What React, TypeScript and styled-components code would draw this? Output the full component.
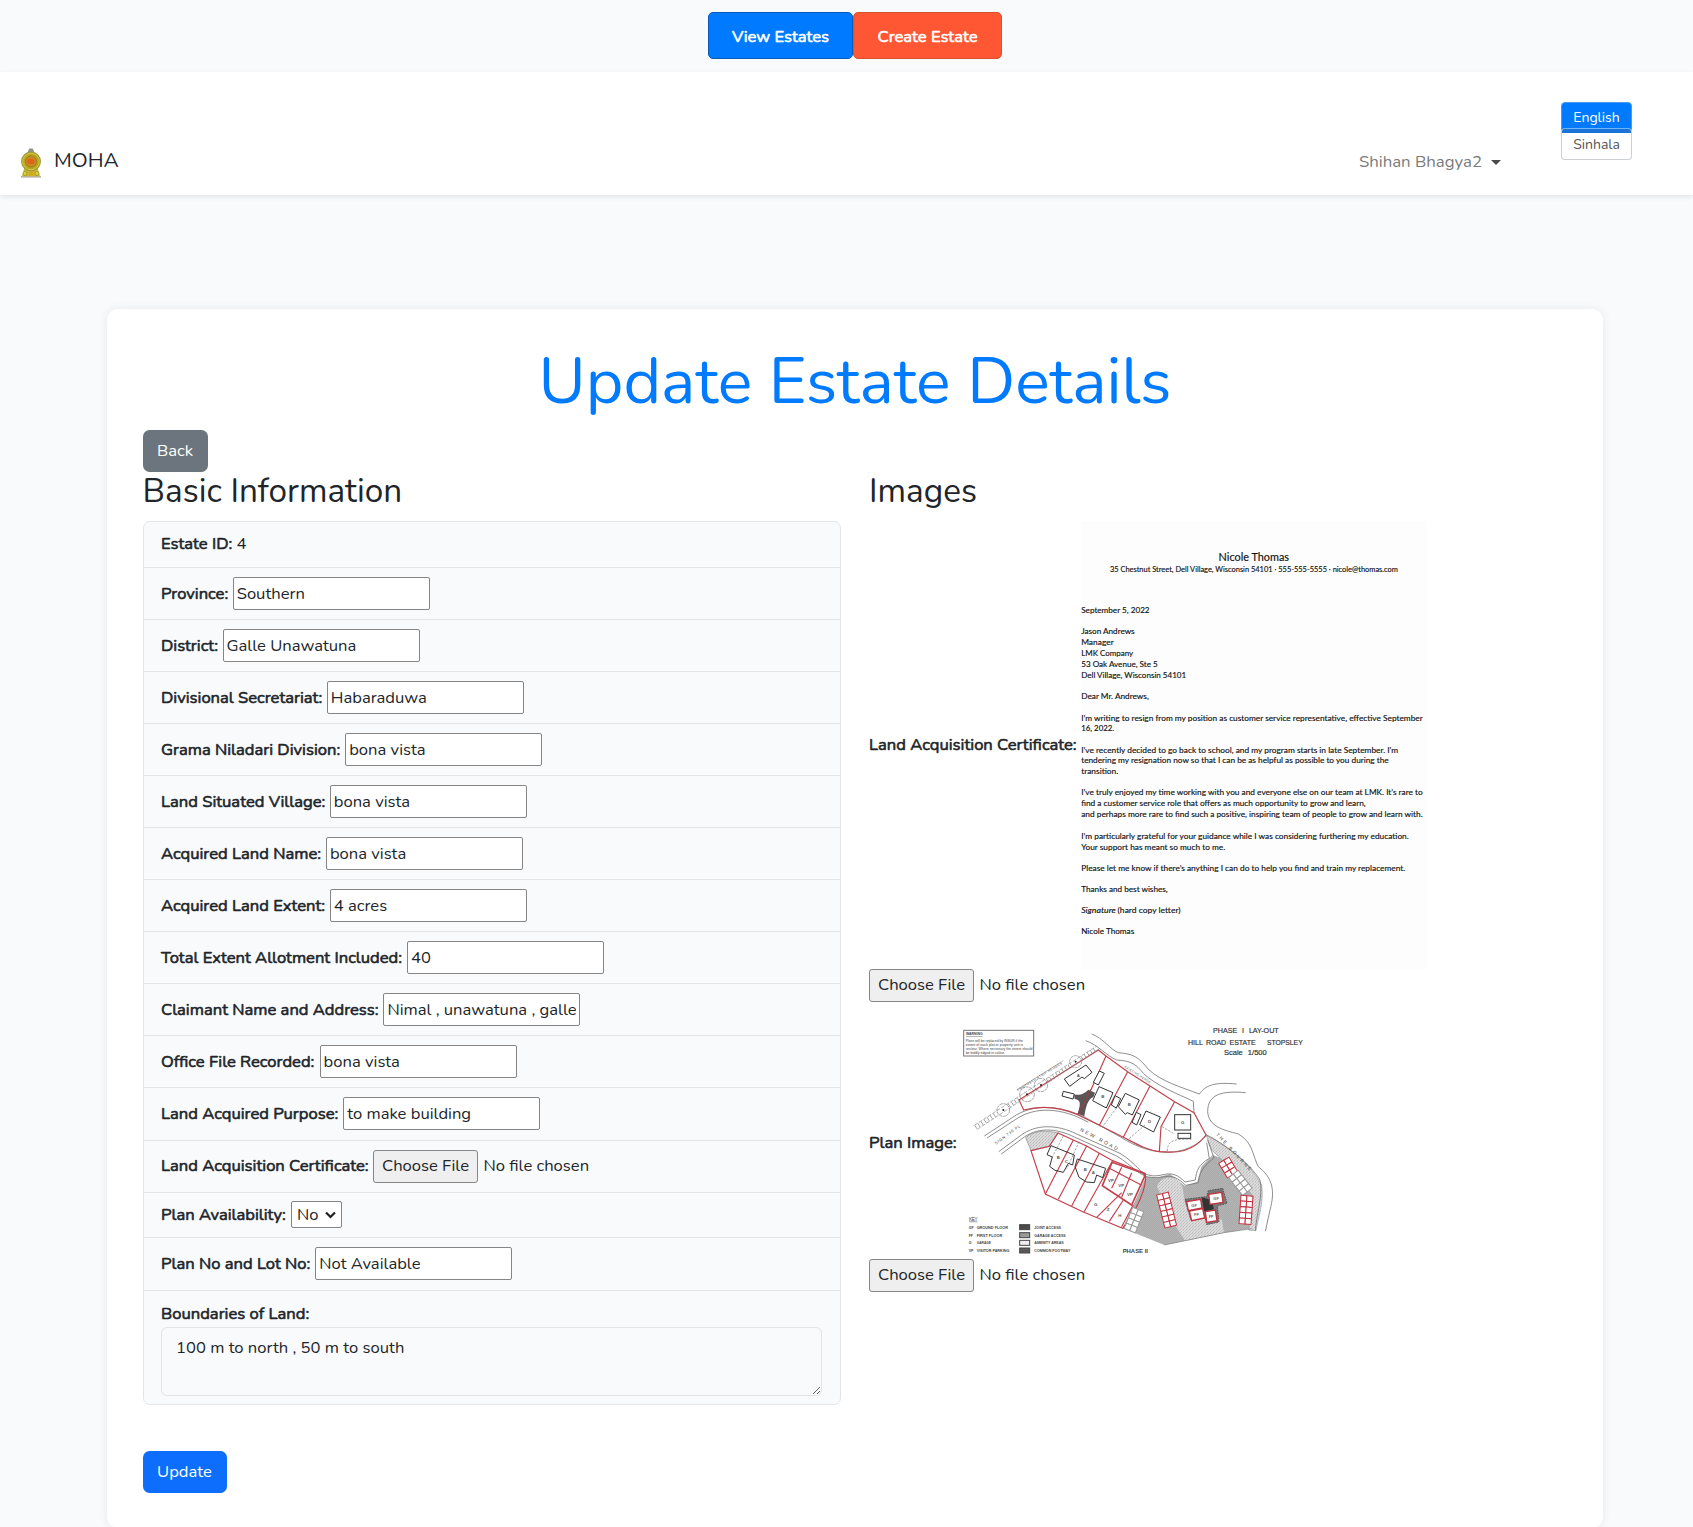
import React from "react";
import styled, { createGlobalStyle } from "styled-components";

const GlobalStyle = createGlobalStyle`
  *, *::before, *::after { box-sizing: border-box; }
  html, body { margin: 0; padding: 0; }
  body {
    background: #f8fafc;
    color: #212529;
    font-family: Nunito, Lato, "Open Sans", sans-serif;
    font-size: 16.6px;
    line-height: 26px;
    overflow: hidden;
  }
  h1, h2, p { margin: 0; font-weight: 400; }
  button, input, select, textarea { font: inherit; color: inherit; letter-spacing: inherit; }
`;

const Page = styled.div`
  height: 1527px;
  overflow: hidden;
`;

const TopBar = styled.div`
  display: flex;
  justify-content: center;
  height: 72px;
  padding: 12px 0 0 17px;
`;

const TopButton = styled.button<{ $bg: string; $edge: string; $width: number }>`
  width: ${(p) => p.$width}px;
  height: 47px;
  padding: 2px 0 0;
  border: 1px solid ${(p) => p.$edge};
  border-radius: 5px;
  background: ${(p) => p.$bg};
  color: #fff;
  -webkit-text-stroke: 0.6px currentColor;
`;

const NavBar = styled.nav`
  display: flex;
  align-items: flex-start;
  height: 123px;
  padding: 0 61px 0 20px;
  background: #fff;
  box-shadow: 0 2px 5px rgba(0, 0, 0, 0.09);
`;

const Brand = styled.div`
  display: flex;
  align-items: flex-start;
  gap: 12px;
  margin-top: 76px;
`;

const BrandName = styled.span`
  font-size: 20.8px;
  line-height: 24px;
`;

const UserMenu = styled.div`
  display: flex;
  align-items: center;
  gap: 9px;
  margin: 77px 60px 0 auto;
  color: #7b7b7b;
  font-size: 16.8px;
`;

const Caret = styled.span`
  border: 5px solid transparent;
  border-top-color: #4c4c4c;
  border-bottom: 0;
`;

const LanguageSwitch = styled.div`
  display: flex;
  flex-direction: column;
  width: 71px;
  margin-top: 30px;
  font-size: 14px;
`;

const LanguageButton = styled.button<{ $active?: boolean }>`
  height: ${(p) => (p.$active ? 31 : 32)}px;
  margin-top: ${(p) => (p.$active ? 0 : -5)}px;
  padding: 0;
  line-height: ${(p) => (p.$active ? 29 : 31)}px;
  border: 1px solid ${(p) => (p.$active ? "#4a9bf0" : "#ccd0d4")};
  border-radius: 4px;
  border-top-color: ${(p) => (p.$active ? "#4a9bf0" : "#6fb4fb")};
  background: ${(p) =>
    p.$active ? "#007bff" : "linear-gradient(#1a73d9 0 4px, #fff 4px)"};
  color: ${(p) => (p.$active ? "#fff" : "#555")};
`;

const Card = styled.main`
  width: 1496px;
  height: 1219px;
  margin: 114px 0 0 107px;
  padding: 34px 35.5px;
  border-radius: 11px;
  background: #fff;
  box-shadow: 0 0 10px rgba(0, 0, 0, 0.08);
`;

const Title = styled.h1`
  height: 86.5px;
  color: #007bff;
  font-size: 64.7px;
  line-height: 78px;
  text-align: center;
`;

const ActionButton = styled.button<{ $bg: string; $width: number }>`
  display: block;
  width: ${(p) => p.$width}px;
  height: 42.5px;
  padding: 1px 0 0;
  border: 0;
  border-radius: 6.5px;
  background: ${(p) => p.$bg};
  color: #fff;
`;

const Columns = styled.div`
  display: grid;
  grid-template-columns: 698.5px 1fr;
  column-gap: 28px;
`;

const Column = styled.section`
  display: flex;
  flex-direction: column;
  align-items: stretch;
`;

const SectionTitle = styled.h2`
  height: 48.5px;
  font-size: 33.3px;
  line-height: 38px;
`;

const InfoList = styled.div`
  overflow: hidden;
  border: 1px solid #e3e6e9;
  border-radius: 7px;
  background: #f8fafc;
`;

const InfoRow = styled.div<{ $height?: number }>`
  display: flex;
  align-items: center;
  height: ${(p) => p.$height ?? 52.05}px;
  padding: 0 17.5px;
  border-bottom: 1px solid #e3e6e9;
`;

const Label = styled.span<{ $width?: number; $drop?: number }>`
  flex: none;
  width: ${(p) => (p.$width ? p.$width + "px" : "auto")};
  margin-top: ${(p) => p.$drop ?? 0}px;
  -webkit-text-stroke: 0.6px currentColor;
  white-space: nowrap;
`;

const TextInput = styled.input`
  width: 197px;
  height: 33px;
  padding: 1px 3px;
  border: 1px solid #858585;
  border-radius: 2px;
  background: #fff;
`;

const PlanSelect = styled.div`
  display: flex;
  align-items: center;
  justify-content: space-between;
  width: 51px;
  height: 26.5px;
  padding: 0 5px;
  border: 1px solid #858585;
  border-radius: 2px;
  background: #fff;
`;

const FilePicker = styled.div`
  display: flex;
  align-items: center;
  gap: 5.5px;
`;

const FileButton = styled.button`
  width: 105px;
  height: 33px;
  padding: 0;
  border: 1px solid #858585;
  border-radius: 3px;
  background: #efefef;
`;

const BoundaryRow = styled.div`
  height: 113px;
  padding: 10px 18.5px 0 17.5px;
`;

const BoundaryArea = styled.textarea`
  display: block;
  width: 661px;
  height: 69.5px;
  padding: 7px 14px;
  border: 1px solid #e1e4e8;
  border-radius: 6px;
  background: #f8fafc;
  resize: both;
`;

const Figure = styled.div<{ $height: number }>`
  display: flex;
  align-items: center;
  height: ${(p) => p.$height}px;
`;

const PlanFigure = styled(Figure)`
  margin-top: 8px;
`;

const UpdateSlot = styled.div`
  margin-top: 46px;
`;

const Emblem = () => (
  <svg width="22" height="30" viewBox="0 0 22 30">
    <path d="M8 3 L9.5 0.5 H12.5 L14 3 L13 6 H9 Z" fill="#8d9488" />
    <path d="M2 28.5 L4 21 H18 L20 28.5 Z" fill="#c9b92c" />
    <circle cx="11" cy="13.5" r="10" fill="#9c9a3c" />
    <circle cx="11" cy="13.5" r="8.3" fill="#b9a71f" stroke="#d8c63a" />
    <circle cx="11" cy="13.5" r="5.6" fill="#c98a1b" stroke="#8e7a1e" strokeWidth="0.8" />
    <path d="M8 11 h5 l1.5 2 -1 3 h-5 l-1.5-2z" fill="#e2611c" />
    <rect x="1" y="28" width="20" height="1.6" fill="#b8b29a" />
    <circle cx="5" cy="25.5" r="2" fill="#e3d23a" stroke="#8e8a2a" strokeWidth="0.7" />
    <circle cx="17" cy="25.5" r="2" fill="#e3d23a" stroke="#8e8a2a" strokeWidth="0.7" />
    <rect x="9" y="23.5" width="4" height="4" fill="#d9a520" />
  </svg>
);

type LetterLine = [text: string, baseline: number, length: number];

const letterLines: LetterLine[] = [
  ["September 5, 2022", 613, 68.4],
  ["Jason Andrews", 634.7, 53.4],
  ["Manager", 645.5, 32.5],
  ["LMK Company", 656.3, 52],
  ["53 Oak Avenue, Ste 5", 667, 76.5],
  ["Dell Village, Wisconsin 54101", 678, 105],
  ["Dear Mr. Andrews,", 699.7, 67.6],
  ["I’m writing to resign from my position as customer service representative, effective September", 721, 341.5],
  ["16, 2022.", 731.7, 33],
  ["I’ve recently decided to go back to school, and my program starts in late September. I’m", 753, 317],
  ["tendering my resignation now so that I can be as helpful as possible to you during the", 763.7, 307.5],
  ["transition.", 774.5, 37],
  ["I’ve truly enjoyed my time working with you and everyone else on our team at LMK. It’s rare to", 795.7, 341.5],
  ["find a customer service role that offers as much opportunity to grow and learn,", 806.7, 284.5],
  ["and perhaps more rare to find such a positive, inspiring team of people to grow and learn with.", 817.5, 341.5],
  ["I’m particularly grateful for your guidance while I was considering furthering my education.", 839, 327.5],
  ["Your support has meant so much to me.", 850, 144],
  ["Please let me know if there’s anything I can do to help you find and train my replacement.", 871, 324],
  ["Thanks and best wishes,", 892.3, 86.5],
  ["Nicole Thomas", 934.5, 53],
];

const Letter = () => (
  <svg
    width="346"
    height="448"
    viewBox="1081.7 521.5 346 448"
    fontFamily="Lato, sans-serif"
    fontSize="8.2"
    fill="#111"
    stroke="#111"
    strokeWidth="0.15"
  >
    <rect x="1081.7" y="521.5" width="346" height="448" fill="#fdfdfd" stroke="none" />
    <text x="1219.3" y="561" fontSize="10.8" textLength="70.4" lengthAdjust="spacingAndGlyphs">Nicole Thomas</text>
    <text x="1110.6" y="572.3" fontSize="7.9" textLength="288" lengthAdjust="spacingAndGlyphs">
      35 Chestnut Street, Dell Village, Wisconsin 54101 · 555-555-5555 · nicole@thomas.com
    </text>
    {letterLines.map(([text, y, length]) => (
      <text key={y} x="1081.9" y={y} textLength={length} lengthAdjust="spacingAndGlyphs">
        {text}
      </text>
    ))}
    <text x="1081.9" y="913.3" textLength="34.5" lengthAdjust="spacingAndGlyphs" fontStyle="italic">Signature</text>
    <text x="1118.3" y="913.3" textLength="63" lengthAdjust="spacingAndGlyphs">(hard copy letter)</text>
  </svg>
);

const Tree = ({ x, y, r }: { x: number; y: number; r: number }) => (
  <g>
    <circle cx={x} cy={y} r={r} fill="none" stroke="#777" strokeWidth="2" strokeDasharray="9 2" />
    <circle cx={x} cy={y} r="3" fill="#222" />
  </g>
);

const Garages = ({ x, y, angle, rows, red = true }: { x: number; y: number; angle: number; rows: number; red?: boolean }) => (
  <g transform={`translate(${x} ${y}) rotate(${angle})`} stroke={red ? "#c2323f" : "#999"} strokeWidth="3">
    {Array.from({ length: rows }, (_, i) => (
      <g key={i}>
        <rect x="0" y={i * 17} width="18" height="17" fill="#fff" />
        <rect x="18" y={i * 17} width="18" height="17" fill="#fff" />
      </g>
    ))}
  </g>
);

const keyRows = [
  { code: "GF", name: "GROUND FLOOR", width: 94, area: "JOINT ACCESS", areaWidth: 80, fill: "#4a4a4a", y: 656 },
  { code: "FF", name: "FIRST FLOOR", width: 77, area: "GARAGE ACCESS", areaWidth: 94, fill: "#9a9a9a", y: 680 },
  { code: "G", name: "GARAGE", width: 43, area: "AMENITY AREAS", areaWidth: 88, fill: "#eee", y: 703 },
  { code: "VP", name: "VISITOR PARKING", width: 98, area: "COMMON FOOTWAY", areaWidth: 108, fill: "#5a5a5a", y: 726 },
];

const noticeLines: [string, number, number][] = [
  ["Plans will be replaced by INSUR if the", 97, 172],
  ["extent of each plot or property unit is", 109, 172],
  ["unclear. Where necessary the extent should", 121, 200],
  ["be boldly edged in colour.", 133, 118],
];

const SitePlan = () => (
  <svg width="355" height="249" viewBox="63 0 1065 747" fontFamily="Liberation Sans, Arial, sans-serif" fill="none">
    <defs>
      <pattern id="speckle" width="9" height="9" patternUnits="userSpaceOnUse">
        <rect width="9" height="9" fill="#dcdcdc" />
        <circle cx="2" cy="2" r="1.4" fill="#8f8f8f" />
        <circle cx="7" cy="5" r="1.2" fill="#aaa" />
        <circle cx="4" cy="8" r="1.1" fill="#999" />
      </pattern>
      <pattern id="hatch" width="6" height="6" patternUnits="userSpaceOnUse">
        <rect width="6" height="6" fill="#b3b3b3" />
        <path d="M0 6 L6 0" stroke="#a2a2a2" strokeWidth="1.5" />
      </pattern>
    </defs>

    <rect x="71" y="61" width="210" height="77" stroke="#777" strokeWidth="3" />
    <g fill="#444">
      <text x="78" y="76" fontSize="12" fontWeight="700" textLength="50" lengthAdjust="spacingAndGlyphs" textDecoration="underline">WARNING</text>
      {noticeLines.map(([text, y, length]) => (
        <text key={y} x="77" y={y} fontSize="10" textLength={length} lengthAdjust="spacingAndGlyphs">{text}</text>
      ))}
    </g>
    <g fill="#333" fontSize="20" stroke="#333" strokeWidth="0.5">
      <text x="819" y="70" textLength="197" lengthAdjust="spacingAndGlyphs" wordSpacing="8">PHASE I LAY-OUT</text>
      <text x="744" y="104" textLength="203" lengthAdjust="spacingAndGlyphs" wordSpacing="4">HILL ROAD ESTATE</text>
      <text x="981" y="104" textLength="107" lengthAdjust="spacingAndGlyphs">STOPSLEY</text>
      <text x="852" y="136" textLength="128" lengthAdjust="spacingAndGlyphs" wordSpacing="8">Scale 1/500</text>
    </g>

    {/* access areas */}
    <path d="M257 383 C280 361 320 360 354 369 L328 409 L273 422 Z" fill="url(#speckle)" stroke="#888" strokeWidth="2" />
    <path d="M618 500 L650 503 L690 492 L735 528 L772 515 L784 470 L818 435 L860 450 L940 545 L935 655 L852 668 L735 692 L673 705 L548 655 Z" fill="url(#hatch)" />
    <path d="M651 530 C658 505 690 492 716 512 C733 530 728 550 738 590 L846 630 L852 668 L735 692 L707 648 L660 550 Z" fill="url(#speckle)" />
    <path d="M798 375 C850 400 920 445 965 525 C972 580 955 620 948 662 L926 660 L940 560 L900 510 L842 445 L815 420 Z" fill="url(#speckle)" stroke="#999" strokeWidth="2" />
    <path d="M673 705 L852 668 L935 656" stroke="#777" strokeWidth="2" />

    {/* roads */}
    <g stroke="#777" strokeWidth="2.5">
      <path d="M133 378 L218 322 C280 278 370 285 450 330 L540 380 C640 445 740 440 798 378" />
      <path d="M141 384 L226 329 C285 288 365 292 445 337" />
      <path d="M176 425 L240 378 C285 342 350 342 410 372 L540 430 C590 460 600 493 630 496 C670 505 690 470 735 516 L766 510 C770 480 775 465 808 445 L800 398" />
      <path d="M184 432 L246 386 C290 352 345 352 405 382 L530 438 C580 468 600 502 635 502 C675 508 690 480 737 526 L775 518 C778 488 788 470 822 444 L803 390" />
      <path d="M455 72 C490 85 510 118 535 128 C580 132 595 140 625 178 C665 215 720 230 778 252 C795 228 820 215 890 222" />
      <path d="M437 92 C475 105 500 138 530 150 C575 152 590 165 610 190 C650 228 710 250 760 274 L762 310" />
      <path d="M917 248 C850 242 803 250 803 305 C806 350 850 360 895 372 C940 400 935 430 955 470 C1000 505 1005 545 990 600 L976 664" />
      <path d="M798 374 C850 400 930 460 960 510 C970 555 948 620 946 662" />
    </g>

    {/* plot boundaries */}
    <g stroke="#c2414c" strokeWidth="3.5">
      <path d="M237 270 L475 120 L498 138 L563 185 L630 228 L704 275 L762 308 L798 375 C760 425 715 430 658 425 C620 420 590 402 550 382 L478 346 L413 314 C360 292 310 284 251 300 Z" />
      <path d="M498 138 L455 235 L413 314 M563 185 L478 346 M630 228 L550 382 M704 275 L663 350 L658 425" />
      <path d="M273 422 L328 409 L354 369 L400 390 L440 408 L478 430 L518 452 L616 490 C622 535 590 600 548 655 L430 606 L316 552 Z" />
      <path d="M400 390 L316 552 M440 408 L355 568 M478 430 L395 588 M518 452 L432 606 M545 548 L470 622 M580 584 L545 650 M550 570 L508 634" />
      <path d="M516 457 L487 527 L575 585 L615 497 L610 490 Z" strokeWidth="5" />
      <path d="M545 472 L515 535 M575 488 L545 562 M508 475 L605 526" />
    </g>

    {/* houses */}
    <g stroke="#333" strokeWidth="3" fill="#fff">
      <path d="M373 207 L438 165 L456 187 L433 206 L426 201 L389 229 Z" />
      <path d="M478 183 L493 190 L475 225 L460 217 Z M370 244 L403 252 L399 267 L366 258 Z" />
      <path d="M477 230 L519 248 L499 294 L458 272 Z M556 250 L598 270 L577 315 L562 308 L556 313 L535 290 Z M618 303 L661 321 L641 366 L599 344 Z" />
      <rect x="704" y="314" width="48" height="46" />
      <rect x="714" y="370" width="38" height="15" />
      <path d="M525 257 L542 266 L529 294 L514 285 Z M589 307 L603 314 L590 345 L576 337 Z" />
      <path d="M333 407 L321 434 L337 441 L329 469 L345 481 L370 487 L385 460 L398 465 L403 435 Z" fill="none" />
      <path d="M412 447 L405 470 L417 502 L440 516 L463 518 L470 495 L488 503 L497 475 Z" fill="none" />
    </g>
    <path d="M402 254 C425 257 435 248 445 239 L465 248 L460 262 C444 266 437 292 433 319 L413 311 C421 285 425 270 404 267 Z" fill="#5b5555" />
    <path d="M455 235 L413 314" stroke="#a33a44" strokeWidth="3" />
    <g fill="#555" fontSize="13" fontWeight="700">
      <text x="410" y="201">A</text><text x="484" y="265">B</text><text x="563" y="287">B</text>
      <text x="624" y="339">D</text><text x="723" y="342">G</text><text x="350" y="448">B</text>
      <text x="374" y="458">C</text><text x="431" y="482">B</text><text x="455" y="493">A</text>
      <text x="462" y="588">G</text><text x="500" y="604">Z</text><text x="535" y="621">H</text>
      <text x="504" y="516">VP</text><text x="535" y="530">VP</text><text x="561" y="558">VP</text>
    </g>
    <path d="M536 285 L488 350 M615 345 L565 388 M682 424 C682 395 695 386 754 388 M666 350 L700 370 M417 395 L380 478 M370 378 L337 441" stroke="#777" strokeWidth="2" strokeDasharray="7 4" />

    {/* tree line */}
    <g stroke="#888" strokeWidth="2">
      <path d="M103 346 L470 108 M112 358 L478 116" strokeDasharray="12 4" />
      <path d="M107 352 L172 310 M207 287 L240 266 M322 213 L388 169 M425 144 L468 116" strokeWidth="12" strokeDasharray="2 9" />
      <path d="M230 240 L370 152" strokeWidth="1.5" />
    </g>
    <Tree x={190} y={300} r={19} />
    <Tree x={261} y={253} r={22} />
    <Tree x={303} y={225} r={20} />
    <Tree x={407} y={155} r={18} />

    {/* garages and flats */}
    <Garages x={650} y={555} angle={-14} rows={6} />
    <Garages x={836} y={460} angle={-31} rows={3} />
    <Garages x={866} y={503} angle={-38} rows={4} red={false} />
    <Garages x={903} y={556} angle={4} rows={5} />
    <Garages x={578} y={592} angle={22} rows={4} red={false} />
    <path d="M735 568 L800 560 L805 542 L848 535 L861 580 L832 588 L837 636 L800 644 L796 625 L752 628 Z" stroke="#555" strokeWidth="3" strokeDasharray="5 3" fill="#777" />
    <path d="M785 562 L815 570 L822 598 L792 604 Z" fill="#333" />
    <g stroke="#c2323f" strokeWidth="4" fill="#fff">
      <path d="M740 575 L782 568 L786 594 L745 602 Z M748 603 L788 596 L794 624 L755 632 Z M806 553 L845 547 L849 577 L810 583 Z M796 605 L826 600 L831 632 L800 637 Z" />
    </g>
    <g fill="#666" fontSize="12" fontWeight="700">
      <text x="754" y="590">GF</text><text x="762" y="618">FF</text><text x="820" y="570">GF</text><text x="806" y="623">FF</text>
    </g>

    <g fill="#444">
      <text transform="translate(419 362) rotate(28)" fontSize="15" textLength="126">NEW ROAD</text>
      <text transform="translate(827 374) rotate(47)" fontSize="14" textLength="148">THE BOURNE</text>
      <text transform="translate(168 404) rotate(-36)" fontSize="12" textLength="91">SIGN 736 PL</text>
      <text transform="translate(234 244) rotate(-32)" fontSize="10" textLength="156">PROPOSED STRIP HEDGES</text>
      <text transform="translate(553 172) rotate(32)" fontSize="9" textLength="90">EXISTING HEDGE</text>
      <text x="548" y="728" fontSize="14" fontWeight="700" textLength="76" lengthAdjust="spacingAndGlyphs">PHASE II</text>
      <text x="87" y="632" fontSize="14" textLength="26" textDecoration="underline">KEY</text>
    </g>
    {keyRows.map((row) => (
      <g key={row.code} fill="#444" fontSize="10.5" fontWeight="700">
        <text x="86" y={row.y}>{row.code}</text>
        <text x="110" y={row.y} textLength={row.width} lengthAdjust="spacingAndGlyphs">{row.name}</text>
        <rect x="239" y={row.y - 12} width="30" height="15" fill={row.fill} stroke="#444" strokeWidth="3" />
        <text x="283" y={row.y} textLength={row.areaWidth} lengthAdjust="spacingAndGlyphs">{row.area}</text>
      </g>
    ))}
  </svg>
);

const FileField = () => (
  <FilePicker>
    <FileButton>Choose File</FileButton>
    <span>No file chosen</span>
  </FilePicker>
);

const fields = [
  { label: "Province:", value: "Southern", labelWidth: 71.7 },
  { label: "District:", value: "Galle Unawatuna", labelWidth: 61.5 },
  { label: "Divisional Secretariat:", value: "Habaraduwa", labelWidth: 165.8 },
  { label: "Grama Niladari Division:", value: "bona vista", labelWidth: 184.2 },
  { label: "Land Situated Village:", value: "bona vista", labelWidth: 168.8 },
  { label: "Acquired Land Name:", value: "bona vista", labelWidth: 164.9 },
  { label: "Acquired Land Extent:", value: "4 acres", labelWidth: 168.8 },
  { label: "Total Extent Allotment Included:", value: "40", labelWidth: 246 },
  { label: "Claimant Name and Address:", value: "Nimal , unawatuna , galle", labelWidth: 222.4 },
  { label: "Office File Recorded:", value: "bona vista", labelWidth: 158.6 },
  { label: "Land Acquired Purpose:", value: "to make building", labelWidth: 182.3 },
];

export default function App() {
  return (
    <Page>
      <GlobalStyle />
      <TopBar>
        <TopButton $bg="#007bff" $edge="#0a5cb8" $width={145}>View Estates</TopButton>
        <TopButton $bg="#ff5733" $edge="#d9502f" $width={149}>Create Estate</TopButton>
      </TopBar>
      <NavBar>
        <Brand>
          <Emblem />
          <BrandName>MOHA</BrandName>
        </Brand>
        <UserMenu>
          Shihan Bhagya2
          <Caret />
        </UserMenu>
        <LanguageSwitch>
          <LanguageButton $active>English</LanguageButton>
          <LanguageButton>Sinhala</LanguageButton>
        </LanguageSwitch>
      </NavBar>
      <Card>
        <Title>Update Estate Details</Title>
        <ActionButton $bg="#6c757d" $width={65}>Back</ActionButton>
        <Columns>
          <Column>
            <SectionTitle>Basic Information</SectionTitle>
            <InfoList>
              <InfoRow $height={46.5}>
                <Label>Estate ID:&nbsp;</Label>4
              </InfoRow>
              {fields.map((field) => (
                <InfoRow key={field.label}>
                  <Label $width={field.labelWidth}>{field.label}</Label>
                  <TextInput defaultValue={field.value} />
                </InfoRow>
              ))}
              <InfoRow>
                <Label $width={212}>Land Acquisition Certificate:</Label>
                <FileField />
              </InfoRow>
              <InfoRow $height={45.2}>
                <Label $width={130}>Plan Availability:</Label>
                <PlanSelect>
                  No
                  <svg width="11" height="8" viewBox="0 0 11 8">
                    <path d="M1 1.5 L5.5 6 L10 1.5" fill="none" stroke="#222" strokeWidth="2.2" />
                  </svg>
                </PlanSelect>
              </InfoRow>
              <InfoRow $height={52.8}>
                <Label $width={154.3}>Plan No and Lot No:</Label>
                <TextInput defaultValue="Not Available" />
              </InfoRow>
              <BoundaryRow>
                <Label>Boundaries of Land:</Label>
                <BoundaryArea defaultValue="100 m to north , 50 m to south" />
              </BoundaryRow>
            </InfoList>
          </Column>
          <Column>
            <SectionTitle>Images</SectionTitle>
            <Figure $height={448}>
              <Label $width={212}>Land Acquisition Certificate:</Label>
              <Letter />
            </Figure>
            <FileField />
            <PlanFigure $height={249}>
              <Label $width={91.5} $drop={17}>Plan Image:</Label>
              <SitePlan />
            </PlanFigure>
            <FileField />
          </Column>
        </Columns>
        <UpdateSlot>
          <ActionButton $bg="#0d6efd" $width={84}>Update</ActionButton>
        </UpdateSlot>
      </Card>
    </Page>
  );
}
